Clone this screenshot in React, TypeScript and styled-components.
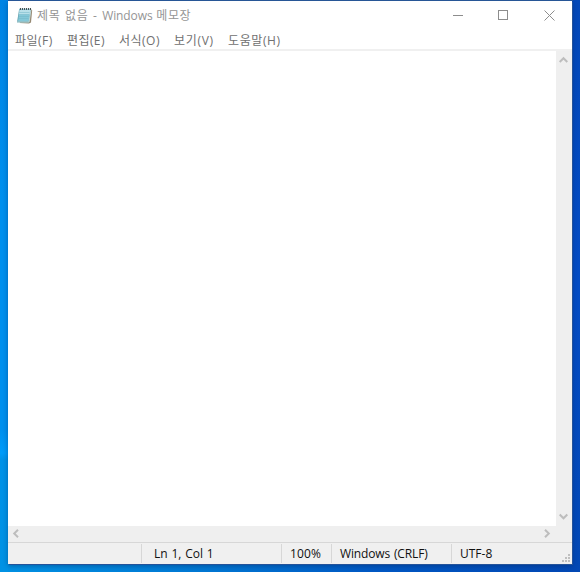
import React from 'react';
import styled, { createGlobalStyle } from 'styled-components';

const GlobalStyle = createGlobalStyle`
  * { box-sizing: border-box; }
  body { margin: 0; overflow: hidden; }
`;

const Desktop = styled.div`
  width: 580px;
  height: 572px;
  padding: 1px 8px 8px;
  overflow: hidden;
  font-family: 'Open Sans', 'Noto Sans CJK KR', sans-serif;
  font-size: 12px;
  background:
    linear-gradient(#2a5a9c, #2a5a9c) 8px 0 / 565px 1px no-repeat,
    linear-gradient(#0084e4, #0090ee 200px, #0090ee 430px, #009cfa 453px, #0092e8 460px, #0092e4) 0 0 / 8px 572px no-repeat,
    linear-gradient(#0348b8, #044cc4 50%, #0348b4) 572px 0 / 8px 572px no-repeat,
    linear-gradient(90deg, #0092e4, #0078d4 35%, #0058c4 65%, #0348b4);
`;

const Window = styled.div`
  width: 564px;
  height: 563px;
  display: flex;
  flex-direction: column;
  background: #fff;
  box-shadow: 1px 1px 0 #24539a, 0 2px 5px rgba(0, 30, 80, 0.4);
`;

const TitleBar = styled.header`
  height: 29px;
  display: flex;
  align-items: center;
  padding-left: 8px;
  color: #959595;
`;

const Title = styled.span`
  flex: 1;
  margin-left: 4px;
  line-height: 28px;
`;

const Text = styled.span<{ $spacing?: number; $gap?: number }>`
  letter-spacing: ${(p) => p.$spacing ?? 0}px;
  word-spacing: ${(p) => p.$gap ?? 0}px;
  white-space: pre;
`;

const CaptionButton = styled.button`
  width: 45.5px;
  height: 29px;
  padding: 0 1px 0 0;
  border: 0;
  background: none;
  display: flex;
  align-items: center;
  justify-content: center;

  &:last-child { padding-right: 0; }
`;

const MenuBar = styled.nav`
  height: 21px;
  display: flex;
  padding-left: 7px;
  border-bottom: 2px solid #f0f0f0;
  color: #707070;
`;

const MenuItem = styled.span<{ $width: number }>`
  width: ${(p) => p.$width}px;
  line-height: 21px;
`;

const Editor = styled.main`
  height: 475px;
  display: grid;
  grid-template-columns: 548px 16px;
`;

const TextArea = styled.div`
  background: #fff;
`;

const VerticalScroll = styled.div`
  background: #efefef;
  display: flex;
  flex-direction: column;
  align-items: center;
  justify-content: space-between;
  padding: 5px 1px 5px 0;
`;

const HorizontalScroll = styled.div`
  height: 16px;
  background: #efefef;
  display: flex;
  align-items: center;
  justify-content: space-between;
  padding: 0 21px 1px 4px;
`;

const StatusBar = styled.footer`
  height: 22px;
  display: flex;
  align-items: center;
  background: #f0f0f0;
  border-top: 1px solid #d7d7d7;
  color: #111;
`;

const StatusCell = styled.div<{ $width: number; $pad?: number }>`
  width: ${(p) => p.$width}px;
  height: 19px;
  padding-left: ${(p) => p.$pad ?? 8}px;
  border-right: 1px solid #d7d7d7;
  line-height: 19px;
  white-space: nowrap;
`;

const LastCell = styled(StatusCell)`
  display: flex;
  justify-content: space-between;
  border-right: 0;
`;

const Grip = styled.svg`
  margin: 10px 2px 0 0;
`;

function NotepadIcon() {
  return (
    <svg width="17" height="17" viewBox="0 0 17 17">
      <path d="M14.7 2.2 16.2 3.2 15 15.6 13 16.4 3.5 16z" fill="#978a74" />
      <path d="M3.2 1.8h12L13.3 15.4H1z" fill="#5f9fac" />
      <path d="M3.6 2.6h10.8l-1.7 11.6H2z" fill="#84c8d8" />
      <path d="M3.6 2.6h10.8l-.8 5H2.9z" fill="#b8e0e9" />
      <path d="M3.2 5.5h10.3M2.9 7.5h10.3M2.6 9.5h10.3M2.3 11.5h10.3" stroke="#73b6c6" strokeWidth=".5" />
      <path d="M1.2 15h11.9l1.8-12" stroke="#dfeeec" strokeWidth=".7" fill="none" />
      <path d="M4.5 1v2M6.5 1v2M8.5 1v2M10.5 1v2M12.5 1v2M14.5 1v2" stroke="#465054" />
    </svg>
  );
}

const arrowPaths = {
  up: 'M.7 6 4.5 2.2 8.3 6',
  down: 'M.7 2.5 4.5 6.3 8.3 2.5',
  left: 'M6 .7 2.2 4.5 6 8.3',
  right: 'M3 .7 6.8 4.5 3 8.3',
};

function Arrow({ direction }: { direction: keyof typeof arrowPaths }) {
  return (
    <svg width="9" height="9" viewBox="0 0 9 9">
      <path d={arrowPaths[direction]} fill="none" stroke="#bdbdbd" strokeWidth="2" />
    </svg>
  );
}

const captionPaths = ['M.5 5.5h10', 'M.5.5h9v9h-9z', 'M.5.5l10 10M10.5.5l-10 10'];

const menus = [
  { label: '파일(F)', width: 52, spacing: 0.5 },
  { label: '편집(E)', width: 52, spacing: 0.4 },
  { label: '서식(O)', width: 55, spacing: 0.5 },
  { label: '보기(V)', width: 54, spacing: 0.7 },
  { label: '도움말(H)', width: 60, spacing: 0.6 },
];

export default function App() {
  return (
    <>
      <GlobalStyle />
      <Desktop>
        <Window>
          <TitleBar>
            <NotepadIcon />
            <Title>
              <Text $spacing={0.6} $gap={1}>제목 없음 - </Text>
              <Text $spacing={-0.1} $gap={0.8}>Windows </Text>
              <Text $spacing={0.5}>메모장</Text>
            </Title>
            {captionPaths.map((d) => (
              <CaptionButton key={d}>
                <svg width="11" height="11" viewBox="0 0 11 11" shapeRendering={d === captionPaths[2] ? 'auto' : 'crispEdges'}>
                  <path d={d} fill="none" stroke="#8d8d8d" />
                </svg>
              </CaptionButton>
            ))}
          </TitleBar>
          <MenuBar>
            {menus.map((m) => (
              <MenuItem key={m.label} $width={m.width}><Text $spacing={m.spacing}>{m.label}</Text></MenuItem>
            ))}
          </MenuBar>
          <Editor>
            <TextArea />
            <VerticalScroll>
              <Arrow direction="up" />
              <Arrow direction="down" />
            </VerticalScroll>
          </Editor>
          <HorizontalScroll>
            <Arrow direction="left" />
            <Arrow direction="right" />
          </HorizontalScroll>
          <StatusBar>
            <StatusCell $width={134} />
            <StatusCell $width={140} $pad={12}><Text $gap={0.7}>Ln 1, Col 1</Text></StatusCell>
            <StatusCell $width={50}><Text $spacing={0.15}>100%</Text></StatusCell>
            <StatusCell $width={120}><Text $spacing={-0.15} $gap={1}>Windows (CRLF)</Text></StatusCell>
            <LastCell $width={120}>
              <Text>UTF-8</Text>
              <Grip width="8" height="8" viewBox="0 0 8 8">
                <path d="M6 0h2v2H6zM3 3h2v2H3zM6 3h2v2H6zM0 6h2v2H0zM3 6h2v2H3zM6 6h2v2H6z" fill="#bfbfbf" />
              </Grip>
            </LastCell>
          </StatusBar>
        </Window>
      </Desktop>
    </>
  );
}
